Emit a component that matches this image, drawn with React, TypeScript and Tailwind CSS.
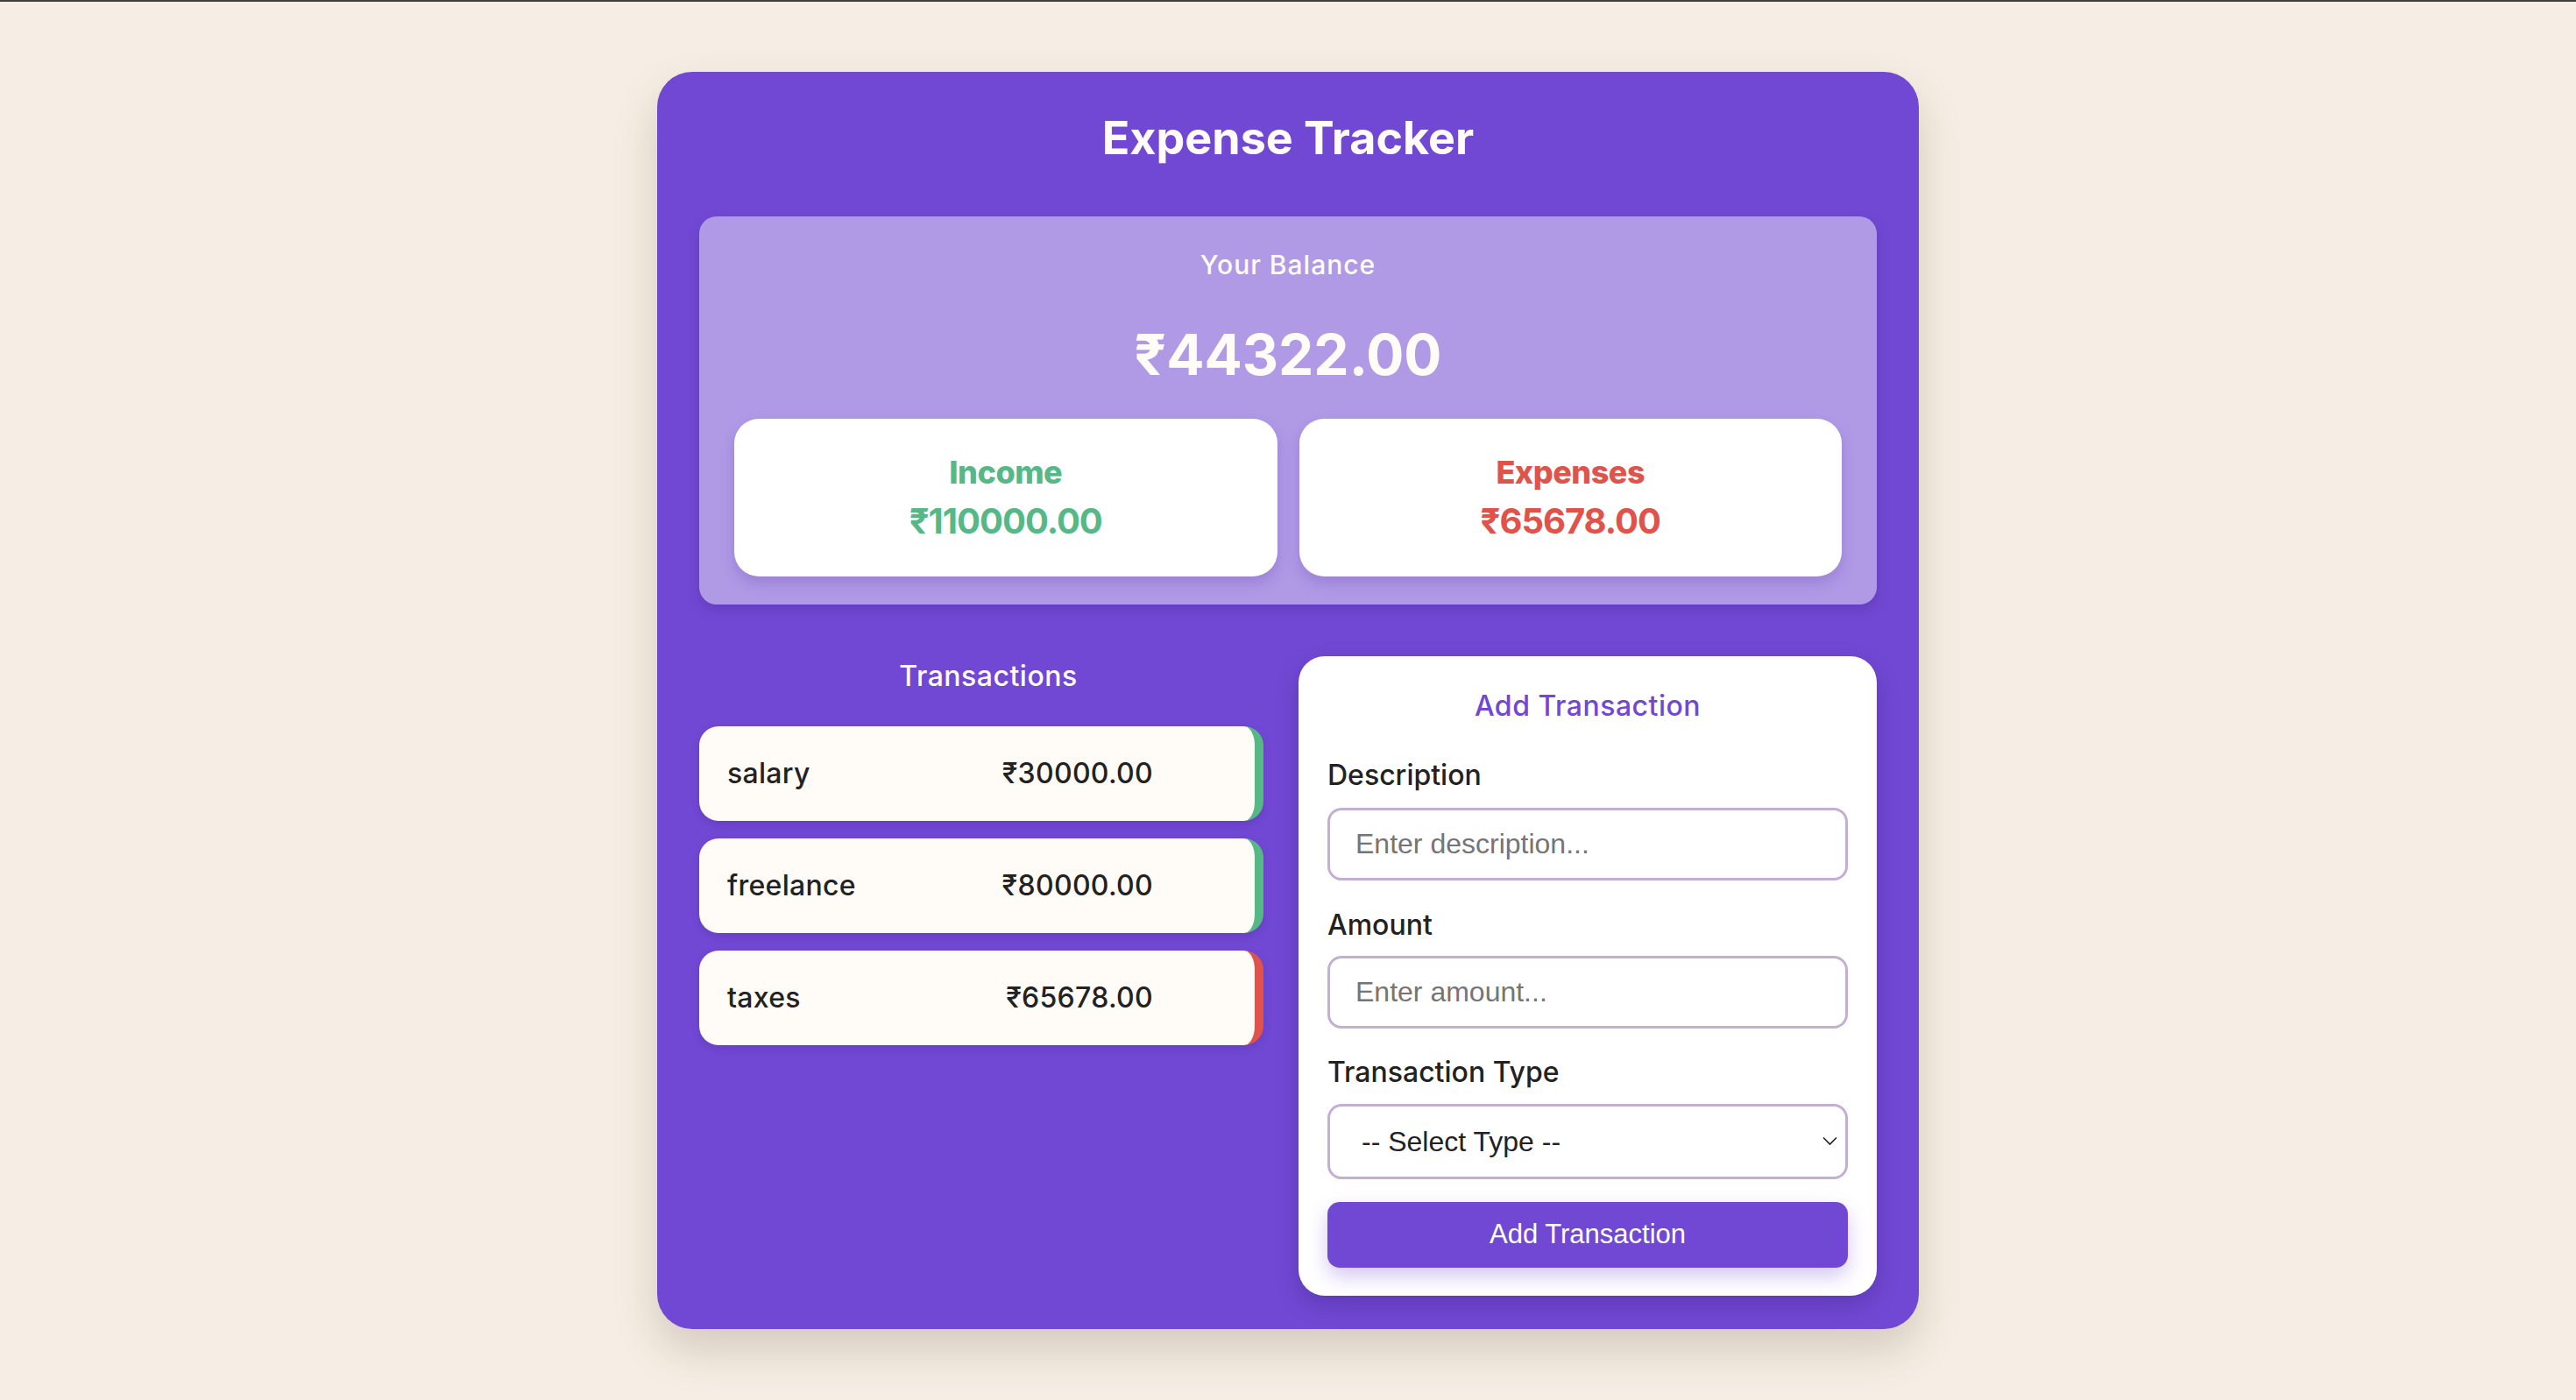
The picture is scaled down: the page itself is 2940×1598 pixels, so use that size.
import { useState } from "react";

type Tx = { id: number; text: string; amount: number };

const initial: Tx[] = [
  { id: 1, text: "salary", amount: 30000 },
  { id: 2, text: "freelance", amount: 80000 },
  { id: 3, text: "taxes", amount: -65678 },
];

const inter = "font-['Inter',sans-serif]";
const arial = "font-['Liberation_Sans',Arial,sans-serif]";

export default function App() {
  const [txs] = useState<Tx[]>(initial);
  const [desc, setDesc] = useState("");
  const [amount, setAmount] = useState("");
  const [type, setType] = useState("");

  const income = txs.filter((t) => t.amount > 0).reduce((s, t) => s + t.amount, 0);
  const expense = txs.filter((t) => t.amount < 0).reduce((s, t) => s - t.amount, 0);
  const balance = income - expense;

  return (
    <div className={`min-h-screen bg-[#f6eee4] ${inter}`}>
      <div className="h-[2px] bg-[#3f3f3f]" />
      <div className="pt-[80px]">
        <div className="mx-auto w-[1440px] rounded-[40px] bg-[#7148d3] px-[48px] pt-[50px] pb-[38px] shadow-[0_24px_50px_rgba(60,40,20,0.18)]">
          <h1 className="text-center text-[52px] leading-[52px] font-bold text-[#fffbf6]">
            Expense Tracker
          </h1>

          <div className="mt-[63px] rounded-[20px] bg-[#b09ae6] px-[40px] pt-[40px] pb-[32px] shadow-[0_6px_14px_rgba(60,30,140,0.25)]">
            <p className="text-center text-[30px] leading-[30px] font-medium tracking-[1px] text-[#fffbf6]">
              Your Balance
            </p>
            <p className="mt-[56px] text-center text-[64px] leading-[64px] font-bold text-[#fffbf6]">
              ₹{balance.toFixed(2)}
            </p>
            <div className="mt-[41px] grid grid-cols-2 gap-[25px]">
              <div className="h-[180px] rounded-[28px] bg-white pt-[43px] text-center shadow-[0_8px_16px_rgba(80,40,160,0.22)]">
                <p className="text-[36px] leading-[36px] font-extrabold tracking-[-0.5px] text-[#56b886]">Income</p>
                <p className="mt-[18px] text-[40px] leading-[40px] font-bold tracking-[-1px] text-[#56b886]">
                  ₹{income.toFixed(2)}
                </p>
              </div>
              <div className="h-[180px] rounded-[28px] bg-white pt-[43px] text-center shadow-[0_8px_16px_rgba(80,40,160,0.22)]">
                <p className="text-[36px] leading-[36px] font-extrabold tracking-[-0.5px] text-[#e0534b]">Expenses</p>
                <p className="mt-[18px] text-[40px] leading-[40px] font-bold tracking-[-1px] text-[#e0534b]">
                  ₹{expense.toFixed(2)}
                </p>
              </div>
            </div>
          </div>

          <div className="mt-[59px] grid grid-cols-2 items-start gap-[24px]">
            <div>
              <h2 className="mt-[7px] text-center text-[32px] leading-[32px] font-medium tracking-[0.5px] text-[#fffbf6]">
                Transactions
              </h2>
              <ul className="mt-[41px] flex flex-col gap-[20px] pr-[16px]">
                {txs.map((t) => (
                  <li
                    key={t.id}
                    className={`flex h-[108px] items-center justify-between rounded-[22px] border-r-[10px] bg-[#fffbf6] pl-[32px] pr-[116px] text-[32px] font-medium tracking-[0.3px] text-[#222] shadow-[0_4px_10px_rgba(40,20,100,0.15)] ${
                      t.amount > 0 ? "border-[#56b886]" : "border-[#e0534b]"
                    }`}
                  >
                    <span>{t.text}</span>
                    <span>₹{Math.abs(t.amount).toFixed(2)}</span>
                  </li>
                ))}
              </ul>
            </div>

            <form
              className="rounded-[30px] bg-white px-[33px] pt-[41px] pb-[32px] shadow-[0_10px_24px_rgba(40,20,100,0.25)]"
              onSubmit={(e) => e.preventDefault()}
            >
              <h3 className="text-center text-[32px] leading-[32px] font-medium tracking-[0.5px] text-[#7148d3]">
                Add Transaction
              </h3>

              <label className="mt-[47px] block text-[32px] leading-[31px] font-medium text-[#222]">
                Description
              </label>
              <input
                value={desc}
                onChange={(e) => setDesc(e.target.value)}
                placeholder="Enter description..."
                className={`mt-[22px] block h-[83px] w-full rounded-[16px] border-[3px] border-[#c3aed4] bg-white px-[29px] text-[32px] text-[#222] outline-none placeholder:text-[#757575] ${arial}`}
              />

              <label className="mt-[35px] block text-[32px] leading-[31px] font-medium text-[#222]">
                Amount
              </label>
              <input
                value={amount}
                onChange={(e) => setAmount(e.target.value)}
                placeholder="Enter amount..."
                className={`mt-[20px] block h-[83px] w-full rounded-[16px] border-[3px] border-[#c3aed4] bg-white px-[29px] text-[32px] text-[#222] outline-none placeholder:text-[#757575] ${arial}`}
              />

              <label className="mt-[34px] block text-[32px] leading-[31px] font-medium text-[#222]">
                Transaction Type
              </label>
              <div className="relative mt-[21px]">
                <select
                  value={type}
                  onChange={(e) => setType(e.target.value)}
                  className={`block h-[86px] w-full appearance-none rounded-[16px] border-[3px] border-[#c3aed4] bg-white pl-[36px] text-[32px] text-[#222] outline-none ${arial}`}
                >
                  <option value="">-- Select Type --</option>
                  <option value="income">Income</option>
                  <option value="expense">Expense</option>
                </select>
                <svg
                  className="pointer-events-none absolute right-[12px] top-[37px]"
                  width="17"
                  height="11"
                  viewBox="0 0 17 11"
                  fill="none"
                >
                  <path d="M1 1.5L8.5 9L16 1.5" stroke="#222" strokeWidth="1.6" />
                </svg>
              </div>

              <button
                type="submit"
                className={`mt-[26px] block h-[75px] w-full rounded-[14px] bg-[#7148d3] text-[31px] text-white shadow-[0_10px_22px_rgba(113,72,211,0.3)] ${arial}`}
              >
                Add Transaction
              </button>
            </form>
          </div>
        </div>
      </div>
    </div>
  );
}
